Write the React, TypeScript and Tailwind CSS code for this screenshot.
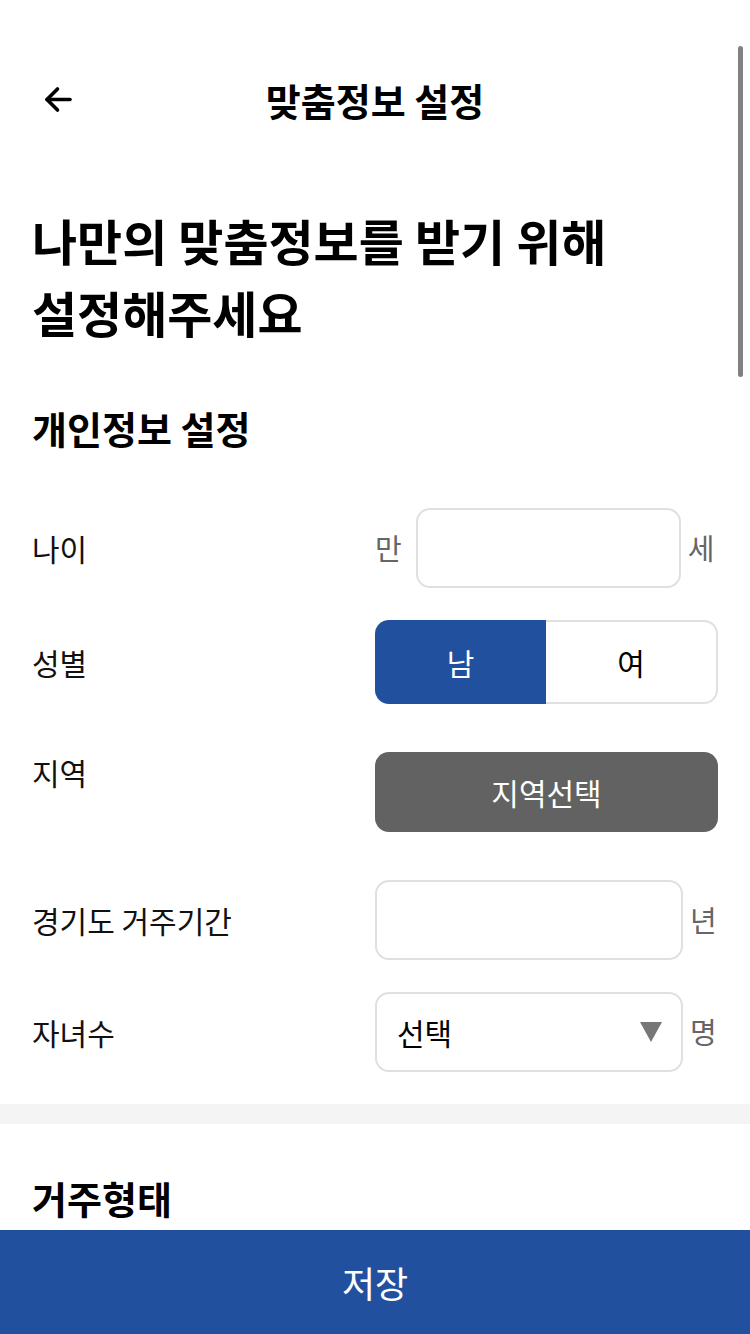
import React from "react";

const font = { fontFamily: '"Noto Sans CJK KR", "Noto Sans", sans-serif' };

function Row({ label, top, children }: { label: string; top?: boolean; children: React.ReactNode }) {
  return (
    <div className={top ? "flex items-start justify-between" : "flex items-center justify-between"}>
      <span className="text-[30px] leading-[40px] text-[#111]">{label}</span>
      <div className="w-[343px]">{children}</div>
    </div>
  );
}

export default function App() {
  return (
    <div className="relative min-h-[1334px] bg-white pb-[104px]" style={font}>
      <div className="absolute right-[7px] top-[46px] h-[331px] w-[5px] rounded-full bg-[#808080]" />

      <header className="relative flex h-[200px] items-center justify-center">
        <button className="absolute left-[43px] top-[86px]">
          <svg width="30" height="28" viewBox="0 0 30 28" fill="none" stroke="#000" strokeWidth="3.6" strokeLinecap="round" strokeLinejoin="round">
            <path d="M4 13.5H27" />
            <path d="M14.5 3 4 13.5 14.5 24" />
          </svg>
        </button>
        <h1 className="text-[38px] font-bold leading-[48px] text-black">맞춤정보 설정</h1>
      </header>

      <div className="px-[32px]">
        <h2 className="mt-[4px] text-[49px] font-bold leading-[72px] text-black">
          나만의 맞춤정보를 받기 위해
          <br />
          설정해주세요
        </h2>

        <h3 className="mt-[56px] text-[38px] font-bold leading-[48px] text-black">개인정보 설정</h3>

        <div className="mt-[56px] flex flex-col">
          <Row label="나이">
            <div className="flex items-center">
              <span className="text-[29px] text-[#666]">만</span>
              <div className="ml-[14px] h-[80px] w-[265px] rounded-[14px] border-2 border-[#e0e0e0]" />
              <span className="ml-[7px] text-[29px] text-[#666]">세</span>
            </div>
          </Row>

          <div className="mt-[32px]">
            <Row label="성별">
              <div className="flex h-[84px]">
                <div className="flex w-[171px] items-center justify-center rounded-l-[14px] bg-[#21509e] text-[30px] text-white">남</div>
                <div className="flex flex-1 items-center justify-center rounded-r-[14px] border-2 border-l-0 border-[#e0e0e0] text-[30px] text-black">여</div>
              </div>
            </Row>
          </div>

          <div className="mt-[48px]">
            <Row label="지역" top>
              <div className="flex h-[80px] items-center justify-center rounded-[14px] bg-[#626262] text-[30px] text-white">지역선택</div>
            </Row>
          </div>

          <div className="mt-[48px]">
            <Row label="경기도 거주기간">
              <div className="flex items-center">
                <div className="h-[80px] w-[308px] rounded-[14px] border-2 border-[#e0e0e0]" />
                <span className="ml-[7px] text-[29px] text-[#666]">년</span>
              </div>
            </Row>
          </div>

          <div className="mt-[32px]">
            <Row label="자녀수">
              <div className="flex items-center">
                <div className="flex h-[80px] w-[308px] items-center justify-between rounded-[14px] border-2 border-[#e0e0e0] pl-[20px] pr-[18px]">
                  <span className="text-[30px] text-black">선택</span>
                  <svg width="24" height="22" viewBox="0 0 24 22">
                    <path d="M1 1h22L12 21z" fill="#777" />
                  </svg>
                </div>
                <span className="ml-[7px] text-[29px] text-[#666]">명</span>
              </div>
            </Row>
          </div>
        </div>
      </div>

      <div className="mt-[32px] h-[20px] bg-[#f4f4f4]" />

      <div className="px-[32px] pt-[50px]">
        <h3 className="text-[38px] font-bold leading-[48px] text-black">거주형태</h3>
      </div>

      <button className="fixed bottom-0 left-0 flex h-[104px] w-full items-center justify-center bg-[#21509e] text-[36px] text-white">
        저장
      </button>
    </div>
  );
}
